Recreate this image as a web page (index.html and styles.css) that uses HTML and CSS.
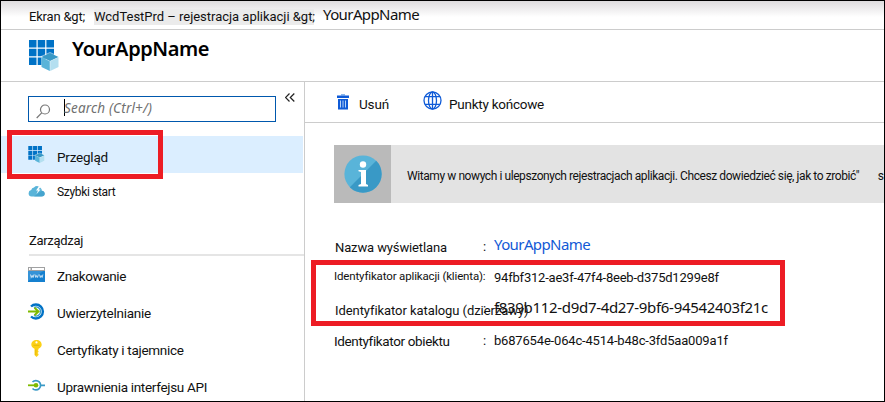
FILE: index.html
```html
<!DOCTYPE html>
<html lang="pl">
<head>
<meta charset="utf-8">
<title>YourAppName</title>
<link rel="stylesheet" href="styles.css">
</head>
<body>
<svg width="0" height="0" class="defs">
  <symbol id="app" viewBox="0 0 30 31">
    <path fill="#0072c6" d="M0 0h7.5v7.5H0zM8.7 0h7.5v7.5H8.7zM17.4 0H25v7.5h-7.6zM0 8.7h7.5v7.5H0zM8.7 8.7h7.5v7.5H8.7zM17.4 8.7H25v7.5h-7.6zM0 17.4h7.5V25H0zM8.7 17.4h7.5V25H8.7z"/>
    <path fill="#fff" d="M21 12l9 4v11l-9 4-9-4V16z" opacity=".5"/>
    <path fill="#3999c6" d="M21 13l8.500 4-8.500 4-8.500-4z"/>
    <path fill="#59b4d9" d="M12.500 17.300l8.300 4V31l-8.300-4z"/>
    <path fill="#b4dff0" d="M29.500 17.300l-8.300 4V31l8.300-4z"/>
  </symbol>
</svg>
<div class="window">
  <nav class="crumbs"><span class="c1">Ekran &amp;gt;</span><span class="c2">WcdTestPrd – rejestracja aplikacji &amp;gt;</span><span class="c3">YourAppName</span></nav>
  <header class="title"><svg class="logo"><use href="#app"/></svg><h1>YourAppName</h1></header>
  <div class="body">
    <aside class="side">
      <div class="searchrow">
        <div class="search">
          <svg width="15" height="15" viewBox="0 0 15 15" fill="none" stroke="#777" stroke-width="1.200"><circle cx="9" cy="5.500" r="4.500"/><path d="M5.700 8.800L.7 14"/></svg>
          <i class="caret"></i><span>Search (Ctrl+/)</span>
        </div>
        <svg class="collapse" width="10" height="9" viewBox="0 0 10 9" fill="none" stroke="#222" stroke-width="1.200"><path d="M4.500.5l-4 4 4 4M9.300.5l-4 4 4 4"/></svg>
      </div>
      <div class="item active"><svg class="ico"><use href="#app"/></svg><span class="t1">Przegląd</span></div>
      <div class="item quick"><svg class="ico" viewBox="0 0 17 17"><path fill="#59b4d9" d="M3.500 13.500a3.300 3.300 0 0 1-.3-6.500A3.300 3.300 0 0 1 6 4.500 4.300 4.300 0 0 1 13 5.500c.8.8.8 1.600.8 2.300 4 .3 4 5.700-.3 5.700z"/><path fill="#3999c6" d="M13.700 7.700c4.200.4 4 5.800-.2 5.800H6z" opacity=".6"/><path fill="#fff" d="M10.800 3.500L8 7.500h2l-1.500 3.500 4-4.500h-2l2-2.500z"/></svg><span class="t2">Szybki start</span></div>
      <h2>Zarządzaj</h2>
      <div class="item"><svg class="ico" viewBox="0 0 17 17"><path fill="#1580cf" d="M0 4h17v12H0z"/><path fill="#4ba0dc" d="M0 4h17L0 15z" opacity=".6"/><path fill="#a0a1a2" d="M0 1h17v4H0z"/><path fill="#fff" d="M4 2h12v2H4zM1 2h1.500v2H1z"/><path fill="none" stroke="#fff" stroke-width=".7" d="M2.500 8.500l.8 3 .9-2 .9 2 .8-3M7 8.500l.8 3 .9-2 .9 2 .8-3M11.500 8.500l.8 3 .9-2 .9 2 .8-3"/></svg><span class="t3">Znakowanie</span></div>
      <div class="item"><svg class="ico" viewBox="0 0 17 17" fill="none"><path stroke="#0072c6" stroke-width="2.400" d="M3 3.500A7 7 0 1 1 3 13.500"/><path stroke="#3999c6" stroke-width="1.300" d="M6 4.500A4.500 4.500 0 1 1 6 12.500"/><path stroke="#7fba00" stroke-width="2" d="M0 8.500h10M6.500 4.700l4 3.800-4 3.800"/></svg><span class="t4">Uwierzytelnianie</span></div>
      <div class="item"><svg class="ico" viewBox="0 0 17 17"><path fill="#fcd116" d="M8.500 0C5.500 0 3.300 2 3.300 4.600c0 2 1.200 3.400 3.200 4.200V15l2 2 2-2v-1l-1-1 1-1v-1l-.7-.7.7-.7v-.8c2-.8 3.200-2.200 3.200-4.200C13.700 2 11.500 0 8.500 0z"/><circle cx="8.500" cy="2.400" r="1.100" fill="#fff"/><path stroke="#e8b90b" stroke-width="1" d="M5.500 5.300h6M7.800 9.500v5.500"/></svg><span class="t5">Certyfikaty i tajemnice</span></div>
      <div class="item"><svg class="ico" viewBox="0 0 17 17" fill="none"><path stroke="#3999c6" stroke-width="1.700" d="M4.500 5A4.700 4.700 0 1 1 4.500 11.500M12.800 8.300H17"/><path stroke="#7fba00" stroke-width="1.800" d="M0 8.300h7"/><circle cx="8" cy="8.300" r="2.300" fill="#7fba00"/></svg><span class="t6">Uprawnienia interfejsu API</span></div>
    </aside>
    <main class="main">
      <div class="toolbar">
        <svg class="trash" width="12" height="16" viewBox="0 0 12 16"><path fill="#8bb9ee" d="M4 0h4v1.500H4z"/><path fill="#0f5bd7" d="M0 1.500h12V4H0zM1 5h10v10.500H1z"/><path stroke="#b9d5f7" d="M3.500 6.500v7M6 6.500v7M8.500 6.500v7"/></svg>
        <span class="b1">Usuń</span>
        <svg class="globe" width="19" height="19" viewBox="0 0 19 19" fill="none" stroke="#0f5bd7" stroke-width="1.300"><circle cx="9.500" cy="9.500" r="8.500"/><ellipse cx="9.500" cy="9.500" rx="4" ry="8.500"/><path d="M9.500 1v17M2 5.700h15M2 13.300h15"/></svg>
        <span class="b2">Punkty końcowe</span>
      </div>
      <div class="banner">
        <div class="info"><svg width="38" height="38" viewBox="0 0 38 38"><circle cx="19" cy="19" r="18.600" fill="#59b4d9"/><path fill="#3999c6" d="M32.200 5.800A18.600 18.600 0 0 1 5.800 32.200z"/><circle cx="19" cy="9.500" r="3.200" fill="#fff"/><path fill="#fff" d="M14.500 15H22v14l2 1v1.500h-9.500V30l2.500-1V17l-2.500-.8z"/></svg></div>
        <span class="msg">Witamy w nowych i ulepszonych rejestracjach aplikacji. Chcesz dowiedzieć się, jak to zrobić"</span><span class="more">s</span>
      </div>
      <div class="props">
        <div class="row r1"><span class="label">Nazwa wyświetlana</span><b>:</b><a class="value">YourAppName</a></div>
        <div class="row r2"><span class="label">Identyfikator aplikacji (klienta):</span><b></b><span class="value">94fbf312-ae3f-47f4-8eeb-d375d1299e8f</span></div>
        <div class="row r3"><span class="label">Identyfikator katalogu (dzierżawy)</span><b>:</b><span class="value">f839b112-d9d7-4d27-9bf6-94542403f21c</span></div>
        <div class="row r4"><span class="label">Identyfikator obiektu</span><b>:</b><span class="value">b687654e-064c-4514-b48c-3fd5aa009a1f</span></div>
      </div>
    </main>
  </div>
  <div class="mark mark-nav"></div>
  <div class="mark mark-ids"></div>
</div>
</body>
</html>
```
FILE: styles.css
```css
* { box-sizing: border-box; }
body { margin: 0; font: 13px/16px Roboto, "Liberation Sans", sans-serif; color: #111; background: #fff; }
h1, h2 { margin: 0; font-weight: 400; }
svg { display: block; flex: none; }
span, a { white-space: nowrap; }
.defs { position: absolute; }
.window { position: relative; width: 885px; height: 402px; border: 1px solid #000; overflow: hidden; }

.crumbs { display: flex; height: 29px; padding: 8px 0 0 28px; border-bottom: 1px solid #ccc; background: linear-gradient(#dedcde, #fff 16px); }
.c1 { width: 65px; letter-spacing: -.2px; }
.c2 { width: 220px; height: 16px; background: #ebebeb; letter-spacing: -.02px; }
.c3 { margin: -3px 0 0 9px; font: 15px/16px "Noto Sans", sans-serif; letter-spacing: -.6px; }

.title { display: flex; height: 52px; padding: 10px 0 0 28px; border-bottom: 1px solid #ccc; }
.logo { width: 30px; height: 31px; }
h1 { margin: -4px 0 0 13px; font: 600 20px/26px "Noto Sans", sans-serif; letter-spacing: -.43px; color: #000; }

.body { display: flex; height: 320px; }
.side { width: 303px; }
.searchrow { display: flex; height: 54px; padding: 14px 0 0 27px; }
.search { display: flex; width: 248px; height: 26px; padding: 7px 0 0 7px; border: 1px solid #0058ad; }
.search span { margin-top: -4px; font: italic 13.5px/16px "Noto Sans", sans-serif; letter-spacing: .18px; color: #707070; }
.caret { width: 1px; height: 17px; margin: -5px -1px 0 13px; background: #000; }
.collapse { margin: -3px 0 0 9px; }

.item { display: flex; height: 37px; padding: 10px 0 0 27px; font-size: 13.5px; }
.item span { margin: 2px 0 0 12px; }
.ico { width: 17px; height: 17px; }
.active { width: 302px; background: #dbeeff; }
.active span { margin-top: 3px; }
.quick .t2 { margin-top: 1px; font-size: 12px; }
.t1 { letter-spacing: -.21px; }
.t2 { letter-spacing: -.33px; }
.t3 { letter-spacing: -.38px; }
.t4 { letter-spacing: -.24px; }
.t5, .t6 { letter-spacing: -.31px; }
h2 { height: 46px; margin-left: 28px; padding-top: 23px; border-bottom: 2px solid #e5e5e5; font-size: 13px; line-height: 16px; letter-spacing: -.31px; }

.main { flex: 1; min-width: 0; border-left: 1px solid #ccc; }
.toolbar { display: flex; height: 41px; padding: 10px 0 0 32px; border-bottom: 1px solid #ccc; font-size: 13.5px; }
.trash { margin-top: 2px; }
.b1 { width: 64px; margin: 4px 0 0 10px; letter-spacing: -.15px; }
.b2 { margin: 4px 0 0 7px; letter-spacing: -.25px; }
.globe { margin-top: -1px; }
.banner { display: flex; height: 58px; margin: 22px 0 0 29px; background: #e3e3e3; font-size: 12px; }
.info { flex: none; width: 57px; height: 58px; padding: 10px; background: #bababa; }
.msg { width: 474px; margin: 23px 0 0 16px; letter-spacing: -.42px; }
.more { margin: 23px 0 0 2px; }

.props { padding: 36px 0 0 30px; }
.row { display: grid; grid-template-columns: 148px 11px 1fr; height: 32px; }
.row b { font-weight: 400; }
.r1 { letter-spacing: -.12px; }
.r1 .label { margin-top: 1px; }
.r1 .value { margin-top: -3px; font: 15px/16px "Noto Sans", sans-serif; letter-spacing: -.6px; color: #1259d6; }
.r2 .label { margin-left: -1px; margin-top: -3px; font-size: 11.5px; letter-spacing: -.15px; }
.r2 .value { margin-top: -1px; letter-spacing: -.21px; }
.r3 { letter-spacing: -.07px; }
.r3 b { margin-top: -2px; }
.r3 .value { margin-top: -4px; font: 15px/16px "Noto Sans", sans-serif; letter-spacing: -.32px; }
.r4 .label { font-size: 13.5px; letter-spacing: -.37px; margin-left: -1px; margin-top: -2px; }
.r4 .value, .r4 b { margin-top: -2px; letter-spacing: -.18px; }

.mark { position: absolute; border: 5px solid #ed1c24; }
.mark-nav { left: 6px; top: 129px; width: 156px; height: 49px; }
.mark-ids { left: 310px; top: 259px; width: 474px; height: 66px; }
```
